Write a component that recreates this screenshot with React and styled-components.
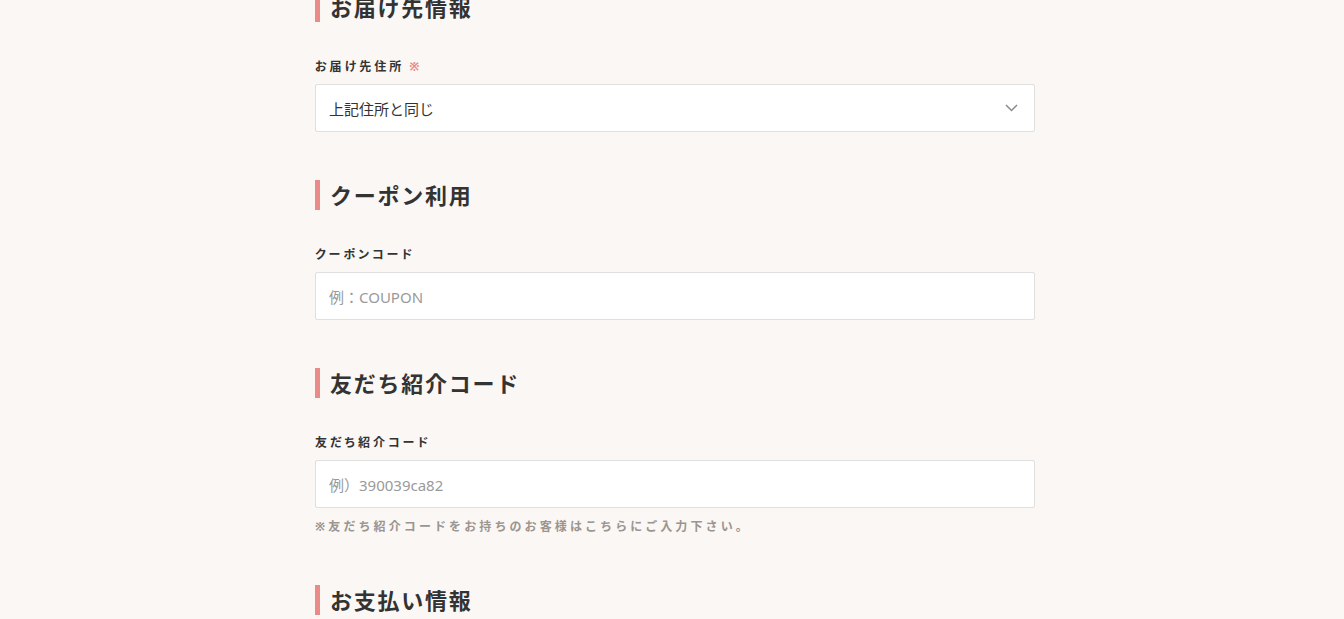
import React from 'react';
import styled, { createGlobalStyle } from 'styled-components';

const GlobalStyle = createGlobalStyle`
  html, body {
    margin: 0;
    padding: 0;
    background: #fbf7f4;
    font-family: "Noto Sans", "Noto Sans CJK JP", sans-serif;
    color: #333;
  }
`;

const Page = styled.main`
  width: 720px;
  margin: -8px 0 0 calc(50% - 357px);
`;

const Section = styled.section`
  margin-bottom: 48px;
`;

const Heading = styled.h2`
  margin: 0 0 35px;
  border-left: 5px solid #ea8b8a;
  padding-left: 10px;
  font-size: 22px;
  line-height: 30px;
  font-weight: 700;
  letter-spacing: 0.08em;
  color: #333;
`;

const Label = styled.label`
  display: block;
  padding-top: 1px;
  margin-bottom: 8px;
  font-size: 12px;
  line-height: 18px;
  font-weight: 700;
  letter-spacing: 0.25em;
  font-feature-settings: "palt";
  color: #333;
`;

const Required = styled.span`
  color: #ea8b8a;
  margin-left: 5px;
`;

const FieldBox = styled.div`
  position: relative;
  box-sizing: border-box;
  height: 48px;
  display: flex;
  align-items: center;
  padding: 0 13px;
  background: #fff;
  border: 1px solid #e1dfdd;
  border-radius: 2px;
  font-size: 15px;
  color: ${(p) => (p.$placeholder ? '#9a9a9a' : '#333')};
`;

const Chevron = styled.svg`
  position: absolute;
  right: 16px;
  top: 50%;
  transform: translateY(-50%);
`;

const Note = styled.p`
  margin: 9px 0 0;
  font-size: 12px;
  line-height: 20px;
  font-weight: 700;
  letter-spacing: 3.1px;
  color: #9a9590;
`;

export default function App() {
  return (
    <>
      <GlobalStyle />
      <Page>
        <Section>
          <Heading>お届け先情報</Heading>
          <Label>
            お届け先住所<Required>※</Required>
          </Label>
          <FieldBox>
            上記住所と同じ
            <Chevron width="13" height="8" viewBox="0 0 13 8">
              <polyline points="1,1 6.5,6.5 12,1" fill="none" stroke="#8a8a8a" strokeWidth="1.5" />
            </Chevron>
          </FieldBox>
        </Section>

        <Section>
          <Heading>クーポン利用</Heading>
          <Label>クーポンコード</Label>
          <FieldBox $placeholder>例：COUPON</FieldBox>
        </Section>

        <Section>
          <Heading>友だち紹介コード</Heading>
          <Label>友だち紹介コード</Label>
          <FieldBox $placeholder>例）390039ca82</FieldBox>
          <Note>※友だち紹介コードをお持ちのお客様はこちらにご入力下さい。</Note>
        </Section>

        <Section>
          <Heading>お支払い情報</Heading>
        </Section>
      </Page>
    </>
  );
}
